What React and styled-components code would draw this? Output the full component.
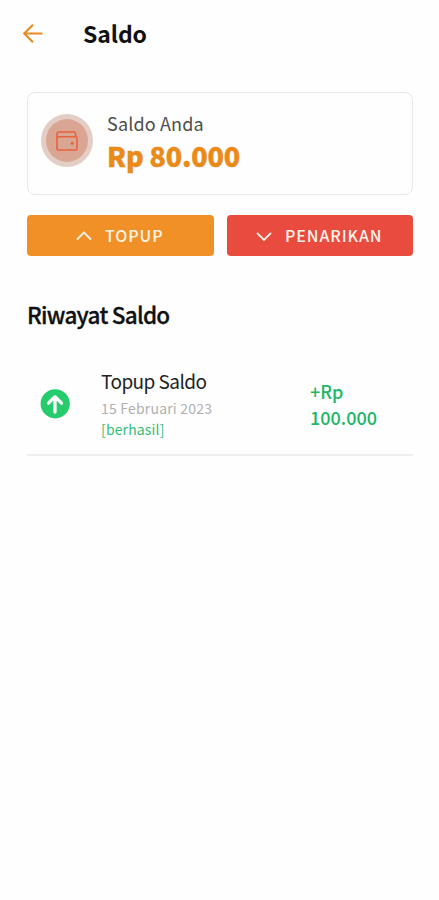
import styled, { createGlobalStyle } from "styled-components";

const transactions = [
  {
    id: 1,
    title: "Topup Saldo",
    date: "15 Februari 2023",
    status: "[berhasil]",
    amount: "+Rp 100.000",
  },
];

const App = () => {
  return (
    <Screen>
      <GlobalStyle />
      <Header>
        <BackButton aria-label="Kembali">
          <svg width="20" height="20" viewBox="0 0 20 20">
            <path
              d="M19.5 9.5H1.5M10 0.7L1.2 9.5l8.8 8.8"
              fill="none"
              stroke="#e98a22"
              strokeWidth="2.1"
            />
          </svg>
        </BackButton>
        <Title>Saldo</Title>
      </Header>

      <BalanceCard>
        <WalletCircle>
          <svg width="22" height="20" viewBox="0 0 22 20">
            <g fill="none" stroke="#e6643c" strokeWidth="1.6">
              <rect x="1" y="5.8" width="20" height="13.2" rx="1.4" />
              <path d="M1 7V3Q1 1 3 1H17.8Q19.6 1 19.6 2.8V5.8" />
            </g>
            <circle cx="16.2" cy="12.3" r="1.5" fill="#e6643c" />
          </svg>
        </WalletCircle>
        <BalanceText>
          <Label>Saldo Anda</Label>
          <Balance>Rp 80.000</Balance>
        </BalanceText>
      </BalanceCard>

      <Actions>
        <ActionButton $color="#f19026">
          <Chevron viewBox="0 0 16 10">
            <path d="M1 8.5L8 1.5l7 7" />
          </Chevron>
          <span>TOPUP</span>
        </ActionButton>
        <ActionButton $color="#e94b3f">
          <Chevron viewBox="0 0 16 10">
            <path d="M1 1.8L8 8.8l7-7" />
          </Chevron>
          <span>PENARIKAN</span>
        </ActionButton>
      </Actions>

      <SectionTitle>Riwayat Saldo</SectionTitle>

      {transactions.map((item) => (
        <Row key={item.id}>
          <svg width="30" height="30" viewBox="0 0 30 30">
            <circle cx="15.2" cy="14.8" r="14.6" fill="#24cc6b" />
            <path
              d="M15 23V8M8.5 14.2L15 7.7l6.5 6.5"
              fill="none"
              stroke="#fff"
              strokeWidth="3.3"
              strokeLinecap="round"
              strokeLinejoin="round"
            />
          </svg>
          <Details>
            <ItemTitle>{item.title}</ItemTitle>
            <ItemDate>{item.date}</ItemDate>
            <Status>{item.status}</Status>
          </Details>
          <Amount>{item.amount}</Amount>
        </Row>
      ))}
    </Screen>
  );
};

const GlobalStyle = createGlobalStyle`
  * {
    box-sizing: border-box;
  }
  body {
    margin: 0;
    background: #fefefe;
    font-family: "Noto Sans CJK SC", "Noto Sans", sans-serif;
  }
  h1, h2, p {
    margin: 0;
  }
  svg {
    display: block;
    flex-shrink: 0;
  }
`;

const Screen = styled.main`
  width: 100%;
  min-height: 100vh;
  padding: 0 26px 0 27px;
`;

const Header = styled.header`
  display: flex;
  align-items: center;
  height: 67px;
  margin-left: -4px;
`;

const BackButton = styled.button`
  padding: 0;
  border: none;
  background: none;
  cursor: pointer;
`;

const Title = styled.h1`
  margin-left: 40px;
  padding-bottom: 1px;
  font-size: 23px;
  font-weight: 700;
  line-height: 30px;
  letter-spacing: -0.1px;
  color: #111;
`;

const BalanceCard = styled.section`
  display: flex;
  height: 103px;
  margin-top: 25px;
  padding: 18px 13px;
  border: 1px solid #e8e8e8;
  border-radius: 8px;
`;

const WalletCircle = styled.div`
  display: flex;
  align-items: center;
  justify-content: center;
  width: 52px;
  height: 53px;
  margin-top: 3px;
  border: 5px solid #e3cec6;
  border-radius: 50%;
  background: #daa593;
`;

const BalanceText = styled.div`
  margin-left: 14px;
`;

const Label = styled.p`
  font-size: 18px;
  line-height: 24px;
  letter-spacing: 0.15px;
  color: #4d4d4d;
`;

const Balance = styled.p`
  font-size: 27px;
  font-weight: 900;
  line-height: 42px;
  letter-spacing: -0.2px;
  -webkit-text-stroke: 0.4px #ea8a18;
  color: #ea8a18;
`;

const Actions = styled.div`
  display: flex;
  gap: 13px;
  margin-top: 20px;
`;

const ActionButton = styled.button`
  display: flex;
  flex: 1;
  align-items: center;
  justify-content: center;
  gap: 13px;
  height: 41px;
  padding: 0 1px 0 0;
  border: none;
  border-radius: 4px;
  background: ${(props) => props.$color};
  color: #fff3e9;
  font-family: inherit;
  font-size: 16px;
  font-weight: 500;
  letter-spacing: 0.9px;
  cursor: pointer;

  span {
    padding-bottom: 2px;
  }
`;

const Chevron = styled.svg`
  width: 16px;
  height: 10px;
  fill: none;
  stroke: #fff3e9;
  stroke-width: 1.9;
`;

const SectionTitle = styled.h2`
  margin-top: 42px;
  font-size: 22.5px;
  font-weight: 500;
  line-height: 32px;
  letter-spacing: -0.75px;
  -webkit-text-stroke: 0.3px #111;
  color: #111;
`;

const Row = styled.article`
  display: flex;
  align-items: center;
  height: 102px;
  margin-top: 24px;
  padding-left: 13px;
  border-bottom: 2px solid #eeeeee;
`;

const Details = styled.div`
  width: 209px;
  margin-left: 31px;
  padding-bottom: 4px;
`;

const ItemTitle = styled.p`
  font-size: 19px;
  line-height: 28px;
  letter-spacing: -0.55px;
  color: #222;
`;

const ItemDate = styled.p`
  padding-top: 1px;
  font-size: 14px;
  line-height: 24px;
  letter-spacing: 0.2px;
  color: #b0b0b0;
`;

const Status = styled.p`
  font-size: 14px;
  line-height: 18px;
  letter-spacing: 0.15px;
  color: #35bd78;
`;

const Amount = styled.p`
  width: 80px;
  padding-bottom: 1px;
  font-size: 18px;
  font-weight: 500;
  line-height: 26px;
  color: #22b565;
`;

export default App;
